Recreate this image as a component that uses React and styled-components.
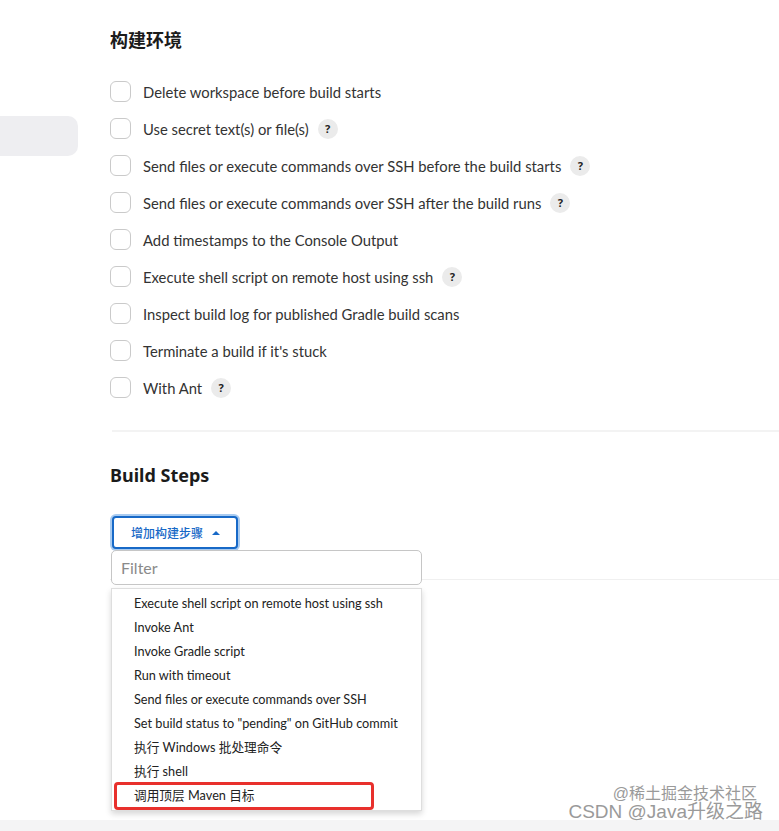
import React from 'react';
import styled, { createGlobalStyle } from 'styled-components';

const GlobalStyle = createGlobalStyle`
  html, body { margin: 0; padding: 0; background: #fff; }
  body {
    font-family: Lato, "Noto Sans CJK SC", sans-serif;
    color: #333;
  }
`;

const Page = styled.div`
  position: relative;
  height: 831px;
  display: flex;
  flex-direction: column;
  overflow: hidden;
`;

const Body = styled.div`
  flex: 1;
  display: flex;
`;

const Sidebar = styled.aside`
  width: 78px;
  flex-shrink: 0;
  padding-top: 116px;
`;

const SideItem = styled.div`
  height: 40px;
  background: #eeeef1;
  border-radius: 0 10px 10px 0;
`;

const Main = styled.main`
  flex: 1;
  padding: 28px 0 0 32px;
`;

const Heading = styled.h2`
  margin: 0;
  font-family: "Noto Sans", "Noto Sans CJK SC", sans-serif;
  font-size: 18px;
  line-height: 24px;
  font-weight: 700;
  color: #1b1b1b;
`;

const Options = styled.div`
  display: flex;
  flex-direction: column;
  margin-top: 21px;
  padding-bottom: 24px;
`;

const Option = styled.label`
  display: flex;
  align-items: center;
  height: 37px;
  font-size: 14.8px;
  color: #333;
`;

const Box = styled.span`
  width: 19px;
  height: 19px;
  border: 1.5px solid #cacaca;
  border-radius: 6px;
  margin-right: 12px;
  flex-shrink: 0;
`;

const Help = styled.span`
  display: inline-flex;
  align-items: center;
  justify-content: center;
  width: 20px;
  height: 20px;
  margin-left: 9px;
  border-radius: 50%;
  background: #ebebeb;
  color: #222;
  font-family: "Noto Sans", sans-serif;
  font-size: 11px;
  font-weight: 700;
`;

const Divider = styled.div`
  height: 2px;
  background: #f3f3f3;
  margin-left: 2px;
`;

const Section = styled.section`
  margin-top: 31px;
`;

const MenuAnchor = styled.div`
  position: relative;
  margin-top: 29px;
  margin-left: 2px;
  display: flex;
`;

const AddButton = styled.button`
  display: inline-flex;
  align-items: center;
  gap: 9px;
  height: 33px;
  padding: 0 16px 0 17px;
  border: 2px solid #1769c7;
  border-radius: 4px;
  background: #fff;
  box-shadow: 0 0 0 2px #a9cbf0;
  color: #1769c7;
  font-family: "Noto Sans CJK SC", sans-serif;
  font-size: 12px;
  font-weight: 500;
`;

const Caret = styled.span`
  width: 0;
  height: 0;
  border-left: 4px solid transparent;
  border-right: 4px solid transparent;
  border-bottom: 4px solid #1769c7;
`;

const Menu = styled.div`
  position: absolute;
  top: 34px;
  left: -1px;
  width: 311px;
  z-index: 2;
`;

const Filter = styled.input`
  box-sizing: border-box;
  display: block;
  width: 100%;
  height: 35px;
  padding: 0 9px;
  border: 1px solid #c6c6c6;
  border-radius: 5px;
  background: #fff;
  font-family: Lato, sans-serif;
  font-size: 16px;
  color: #333;
  outline: none;
  &::placeholder { color: #8a8a8a; }
`;

const List = styled.ul`
  list-style: none;
  margin: 3px 0 0;
  padding: 2px 0 3px;
  background: #fff;
  border: 1px solid #dedede;
  box-shadow: 0 3px 6px rgba(0, 0, 0, 0.16);
`;

const Item = styled.li`
  position: relative;
  height: 24px;
  line-height: 24px;
  padding-left: 22px;
  font-size: 12.7px;
  color: #222;
`;

const Highlight = styled.span`
  position: absolute;
  left: 2px;
  right: 47px;
  top: -1px;
  bottom: -3px;
  border: 3px solid #e8302c;
  border-radius: 4px;
`;

const StepsLine = styled.div`
  height: 1px;
  background: #f0f0f0;
  margin-top: 30px;
`;

const Footer = styled.div`
  height: 11px;
  background: #f4f4f5;
`;

const Watermark = styled.div`
  position: absolute;
  right: 16px;
  bottom: 10px;
  display: flex;
  flex-direction: column;
  align-items: flex-end;
  color: #9a9a9a;
  font-family: "Liberation Sans", "Noto Sans CJK SC", sans-serif;
  line-height: 1;
  text-shadow: 0 0 1px #fff, 0 0 2px #fff;
  pointer-events: none;
`;

const MarkTop = styled.span`
  font-size: 16px;
  margin-right: 6px;
  margin-bottom: 0;
`;

const MarkBottom = styled.span`
  font-size: 19px;
`;

const options = [
  ['Delete workspace before build starts', false],
  ['Use secret text(s) or file(s)', true],
  ['Send files or execute commands over SSH before the build starts', true],
  ['Send files or execute commands over SSH after the build runs', true],
  ['Add timestamps to the Console Output', false],
  ['Execute shell script on remote host using ssh', true],
  ['Inspect build log for published Gradle build scans', false],
  ["Terminate a build if it's stuck", false],
  ['With Ant', true],
];

const steps = [
  'Execute shell script on remote host using ssh',
  'Invoke Ant',
  'Invoke Gradle script',
  'Run with timeout',
  'Send files or execute commands over SSH',
  'Set build status to "pending" on GitHub commit',
  '执行 Windows 批处理命令',
  '执行 shell',
  '调用顶层 Maven 目标',
];

export default function App() {
  return (
    <Page>
      <GlobalStyle />
      <Body>
        <Sidebar>
          <SideItem />
        </Sidebar>
        <Main>
          <Heading>构建环境</Heading>
          <Options>
            {options.map(([label, help]) => (
              <Option key={label}>
                <Box />
                {label}
                {help && <Help>?</Help>}
              </Option>
            ))}
          </Options>
          <Divider />
          <Section>
            <Heading>Build Steps</Heading>
            <MenuAnchor>
              <AddButton>
                增加构建步骤
                <Caret />
              </AddButton>
              <Menu>
                <Filter placeholder="Filter" />
                <List>
                  {steps.map((s, i) => (
                    <Item key={s}>
                      {i === steps.length - 1 && <Highlight />}
                      {s}
                    </Item>
                  ))}
                </List>
              </Menu>
            </MenuAnchor>
            <StepsLine />
          </Section>
        </Main>
      </Body>
      <Footer />
      <Watermark>
        <MarkTop>@稀土掘金技术社区</MarkTop>
        <MarkBottom>CSDN @Java升级之路</MarkBottom>
      </Watermark>
    </Page>
  );
}
